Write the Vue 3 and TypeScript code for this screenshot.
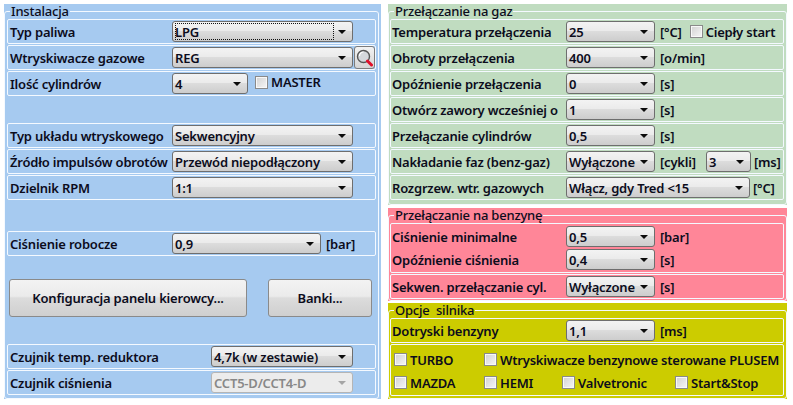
<script setup lang="ts">
interface Wiersz {
  etykieta: string
  wartosc: string
  jednostka: string
}

const gazRows: Wiersz[] = [
  { etykieta: 'Obroty przełączenia', wartosc: '400', jednostka: '[o/min]' },
  { etykieta: 'Opóźnienie przełączenia', wartosc: '0', jednostka: '[s]' },
  { etykieta: 'Otwórz zawory wcześniej o', wartosc: '1', jednostka: '[s]' },
  { etykieta: 'Przełączanie cylindrów', wartosc: '0,5', jednostka: '[s]' }
]
</script>

<template>
  <div class="okno">
    <div class="panel niebieski">
      <fieldset>
        <legend>Instalacja</legend>
        <div class="wiersz">
          <label class="lbl">Typ paliwa</label>
          <div class="combo w-181">
            <span class="focus"></span>
            <span>LPG</span><i></i>
          </div>
        </div>
        <div class="wiersz">
          <label class="lbl">Wtryskiwacze gazowe</label>
          <div class="combo w-181"><span>REG</span><i></i></div>
          <button class="lupa" type="button">
            <svg width="17" height="18" viewBox="0 0 17 18">
              <circle cx="7.5" cy="7.5" r="6" fill="#d5d8dc" stroke="#555" stroke-width="1.4" />
              <path d="M3.5 7a4 4 0 0 1 4-4" fill="none" stroke="#fff" stroke-width="1.2" />
              <path d="M11.5 12l4 4" stroke="#e0102a" stroke-width="3" stroke-linecap="round" />
            </svg>
          </button>
        </div>
        <div class="wiersz">
          <label class="lbl">Ilość cylindrów</label>
          <div class="combo w-76"><span>4</span><i></i></div>
          <span class="chk ml-7 podniesiony"><b></b>MASTER</span>
        </div>

        <div class="wiersz mt-27">
          <label class="lbl">Typ układu wtryskowego</label>
          <div class="combo w-181"><span>Sekwencyjny</span><i></i></div>
        </div>
        <div class="wiersz">
          <label class="lbl">Źródło impulsów obrotów</label>
          <div class="combo w-181"><span>Przewód niepodłączony</span><i></i></div>
        </div>
        <div class="wiersz">
          <label class="lbl">Dzielnik RPM</label>
          <div class="combo w-181"><span>1:1</span><i></i></div>
        </div>

        <div class="wiersz mt-31">
          <label class="lbl">Ciśnienie robocze</label>
          <div class="combo w-149"><span>0,9</span><i></i></div>
          <span class="jedn">[bar]</span>
        </div>

        <div class="przyciski">
          <button class="btn szeroki" type="button">Konfiguracja panelu kierowcy...</button>
          <button class="btn waski" type="button">Banki...</button>
        </div>

        <div class="wiersz">
          <label class="lbl dlugi">Czujnik temp. reduktora</label>
          <div class="combo w-142"><span>4,7k (w zestawie)</span><i></i></div>
        </div>
        <div class="wiersz">
          <label class="lbl dlugi">Czujnik ciśnienia</label>
          <div class="combo w-142 wyl"><span>CCT5-D/CCT4-D</span><i></i></div>
        </div>
      </fieldset>
    </div>

    <div class="prawa">
      <div class="panel zielony">
        <fieldset>
          <legend>Przełączanie na gaz</legend>
          <div class="wiersz r">
            <label class="lbl">Temperatura przełączenia</label>
            <div class="combo w-88"><span>25</span><i></i></div>
            <span class="jedn">[°C]</span>
            <span class="chk ml-8"><b></b>Ciepły start</span>
          </div>
          <div v-for="w in gazRows" :key="w.etykieta" class="wiersz r">
            <label class="lbl">{{ w.etykieta }}</label>
            <div class="combo w-88"><span>{{ w.wartosc }}</span><i></i></div>
            <span class="jedn">{{ w.jednostka }}</span>
          </div>
          <div class="wiersz r">
            <label class="lbl">Nakładanie faz (benz-gaz)</label>
            <div class="combo w-88"><span>Wyłączone</span><i></i></div>
            <span class="jedn cykle">[cykli]</span>
            <div class="combo w-45"><span>3</span><i></i></div>
            <span class="jedn ml-3">[ms]</span>
          </div>
          <div class="wiersz r">
            <label class="lbl">Rozgrzew. wtr. gazowych</label>
            <div class="combo w-184"><span>Włącz, gdy Tred &lt;15</span><i></i></div>
            <span class="jedn ml-3">[°C]</span>
          </div>
        </fieldset>
      </div>

      <div class="panel czerwony">
        <fieldset>
          <legend>Przełączanie na benzynę</legend>
          <div class="blok">
            <div class="wiersz r bez">
              <label class="lbl">Ciśnienie minimalne</label>
              <div class="combo w-88"><span>0,5</span><i></i></div>
              <span class="jedn">[bar]</span>
            </div>
            <div class="wiersz r bez">
              <label class="lbl">Opóźnienie ciśnienia</label>
              <div class="combo w-88"><span>0,4</span><i></i></div>
              <span class="jedn">[s]</span>
            </div>
          </div>
          <div class="wiersz r">
            <label class="lbl">Sekwen. przełączanie cyl.</label>
            <div class="combo w-88"><span>Wyłączone</span><i></i></div>
            <span class="jedn">[s]</span>
          </div>
        </fieldset>
      </div>

      <div class="panel zolty">
        <fieldset>
          <legend>Opcje&nbsp; silnika</legend>
          <div class="wiersz r">
            <label class="lbl">Dotryski benzyny</label>
            <div class="combo w-88"><span>1,1</span><i></i></div>
            <span class="jedn">[ms]</span>
          </div>
          <div class="opcje">
            <span class="chk"><b></b>TURBO</span>
            <span class="chk plusem"><b></b>Wtryskiwacze benzynowe sterowane PLUSEM</span>
            <span class="chk"><b></b>MAZDA</span>
            <span class="chk"><b></b>HEMI</span>
            <span class="chk"><b></b>Valvetronic</span>
            <span class="chk"><b></b>Start&amp;Stop</span>
          </div>
        </fieldset>
      </div>
    </div>
  </div>
</template>

<style scoped>
.okno {
  display: flex;
  width: 793px;
  height: 405px;
  padding: 4px 0 0 4px;
  box-sizing: border-box;
  background: #fff;
  font-family: "Noto Sans", sans-serif;
  font-size: 13px;
  font-weight: 600;
  letter-spacing: -0.2px;
  color: #0c0c1c;
  overflow: hidden;
}

.niebieski { background: #a6caf0; width: 377px; height: 395px; }
.prawa { margin-left: 7px; width: 399px; display: flex; flex-direction: column; }
.zielony { background: #c0dcc0; height: 201px; }
.czerwony { background: #ff8698; height: 93px; margin-top: 3px; }
.zolty { background: #cccc00; height: 96px; margin-top: 2px; }

fieldset {
  margin: 0;
  padding: 0 2px 1px;
  height: 100%;
  box-sizing: border-box;
  border: 1px solid #f4f9ff;
  border-radius: 3px;
}

.niebieski fieldset { margin-right: 2px; width: 375px; }
.prawa fieldset { padding: 0 2px 1px 1px; }

legend {
  height: 15px;
  line-height: 15px;
  padding: 0 1px;
  margin-left: 4px;
  font-weight: 500;
}
.niebieski legend { margin-left: 3px; }

.wiersz {
  display: flex;
  align-items: center;
  height: 25px;
  box-sizing: border-box;
  padding-left: 2px;
  margin-bottom: 1px;
  border: 1px solid #f4f9ff;
  border-radius: 2px;
  white-space: nowrap;
}
.wiersz.r { padding-left: 1px; }
.wiersz.bez { border: none; height: 23px; margin: 0; }

.blok {
  height: 50px;
  box-sizing: border-box;
  padding-top: 1px;
  margin-bottom: 1px;
  border: 1px solid #f4f9ff;
  border-radius: 2px;
}

.lbl { width: 162px; flex: none; }
.lbl.dlugi { width: 201px; }
.wiersz.r .lbl { width: 174px; }

.combo {
  position: relative;
  flex: none;
  display: flex;
  align-items: center;
  height: 21px;
  box-sizing: border-box;
  padding-left: 2px;
  border: 1px solid #6e6e6e;
  border-radius: 3px;
  background: linear-gradient(#f3f3f3 0, #ebebeb 45%, #dcdcdc 50%, #cdcdcd 100%);
}
.combo i {
  position: absolute;
  right: 6px;
  top: 8px;
  border-left: 4px solid transparent;
  border-right: 4px solid transparent;
  border-top: 4px solid #0c0c0c;
}
.combo.wyl { border-color: #b5b5b5; background: #ececec; color: #888; }
.combo.wyl i { border-top-color: #a5a5a5; }
.focus {
  position: absolute;
  left: 2px;
  top: 1px;
  width: 159px;
  height: 17px;
  box-sizing: border-box;
  border: 1px dotted #111;
}

.w-181 { width: 181px; }
.w-76 { width: 76px; }
.w-149 { width: 149px; }
.w-142 { width: 142px; }
.w-88 { width: 89px; }
.w-45 { width: 45px; }
.w-184 { width: 184px; }

.jedn { margin-left: 5px; }
.cykle { width: 46px; }
.jedn.ml-3 { margin-left: 3px; }
.ml-7 { margin-left: 7px; }
.ml-8 { margin-left: 8px; }
.mt-27 { margin-top: 27px; }
.mt-31 { margin-top: 31px; }

.chk { display: inline-flex; align-items: center; white-space: nowrap; }
.chk.podniesiony { margin-top: -3px; }
.chk b {
  width: 13px;
  height: 13px;
  box-sizing: border-box;
  margin-right: 3px;
  flex: none;
  border: 1px solid #8a8a8a;
  background: linear-gradient(135deg, #d2d2d2, #f6f6f6);
  box-shadow: inset 0 0 0 1px #f8f8f8;
}

.lupa {
  flex: none;
  width: 21px;
  height: 23px;
  margin-left: 1px;
  padding: 0;
  display: flex;
  align-items: center;
  justify-content: center;
  border: 1px solid #7c7c7c;
  border-radius: 3px;
  background: linear-gradient(#f3f3f3, #d4d4d4);
}

.przyciski {
  display: flex;
  gap: 21px;
  margin: 23px 0 27px 2px;
}
.btn {
  height: 38px;
  border: 1px solid #8a8a8a;
  border-radius: 3px;
  background: linear-gradient(#f3f3f3 0, #ebebeb 45%, #dcdcdc 50%, #cfcfcf 100%);
  font: inherit;
  letter-spacing: inherit;
  color: inherit;
  padding: 0;
}
.szeroki { width: 238px; }
.waski { width: 104px; }

.opcje {
  display: grid;
  grid-template-columns: 90px 78px 113px auto;
  grid-auto-rows: 23px;
  align-items: center;
  height: 52px;
  box-sizing: border-box;
  padding: 3px 0 0 3px;
  border: 1px solid #f4f9ff;
  border-radius: 2px;
}
.plusem { grid-column: 2 / span 3; }
</style>

<style>
html, body { background: #fff; }
</style>
